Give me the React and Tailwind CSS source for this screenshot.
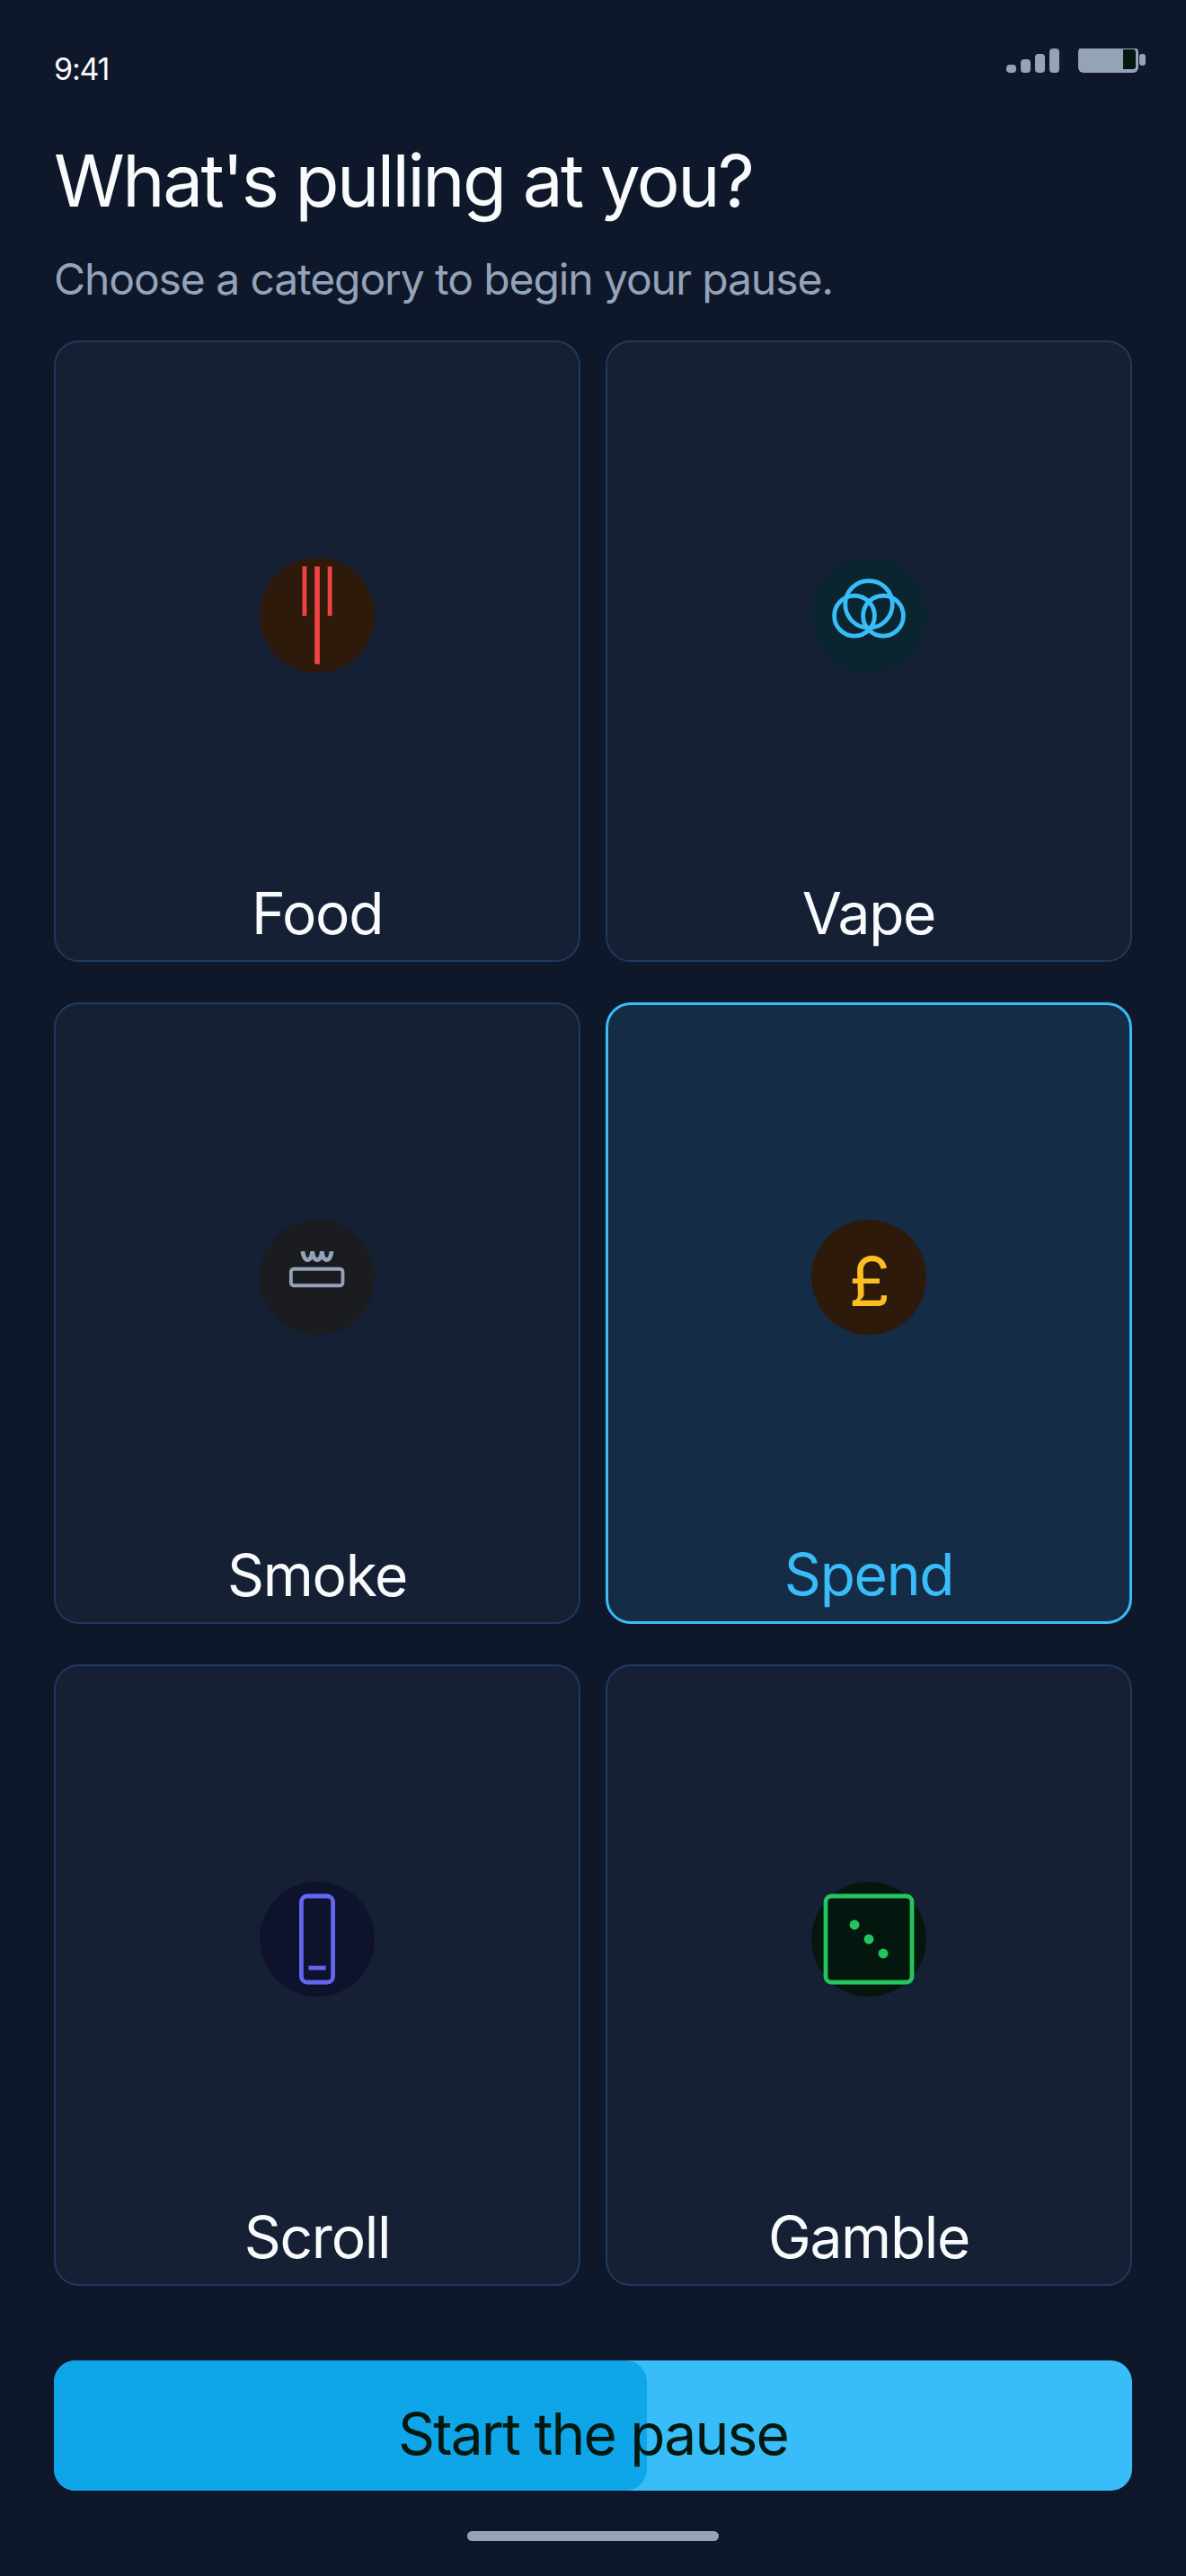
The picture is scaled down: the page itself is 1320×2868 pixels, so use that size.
const categories = [
  { name: "Food", tint: "bg-[#2e1a0b]", icon: <FoodIcon /> },
  { name: "Vape", tint: "bg-[#0a2430]", icon: <VapeIcon /> },
  { name: "Smoke", tint: "bg-[#1a1c20]", icon: <SmokeIcon /> },
  { name: "Spend", tint: "bg-[#2e1a0b]", selected: true, icon: <span className="pl-[2px] pt-[8px] text-[76px] leading-none text-[#fbbf24]">£</span> },
  { name: "Scroll", tint: "bg-[#0f122c]", icon: <ScrollIcon /> },
  { name: "Gamble", tint: "bg-[#04170f]", icon: <GambleIcon /> },
];

function IconSvg({ children }) {
  return (
    <svg width="128" height="128" viewBox="0 0 40 40" fill="none">
      {children}
    </svg>
  );
}

function FoodIcon() {
  return (
    <IconSvg>
      <g stroke="#ef4444">
        <path d="M15.6 3V20.2M24.4 3V20.2" strokeWidth="1.5" />
        <path d="M20 3V37" strokeWidth="1.8" />
      </g>
    </IconSvg>
  );
}

function VapeIcon() {
  return (
    <IconSvg>
      <g stroke="#38bdf8" strokeWidth="1.5">
        <circle cx="20" cy="16.2" r="8.2" />
        <circle cx="15" cy="20.2" r="7" />
        <circle cx="25" cy="20.2" r="7" />
      </g>
    </IconSvg>
  );
}

function SmokeIcon() {
  return (
    <IconSvg>
      <g stroke="#94a3b8">
        <rect x="10.9" y="17.1" width="18" height="5.8" rx="1" strokeWidth="1.2" />
        <path d="M15 11a1.67 3.2 0 0 0 3.33 0a1.67 3.2 0 0 0 3.33 0a1.67 3.2 0 0 0 3.33 0" strokeWidth="1.5" />
      </g>
    </IconSvg>
  );
}

function ScrollIcon() {
  return (
    <IconSvg>
      <g stroke="#6366f1" strokeWidth="1.5">
        <rect x="14.5" y="5" width="11" height="30" rx="2" />
        <path d="M17 30H23" />
      </g>
    </IconSvg>
  );
}

function GambleIcon() {
  return (
    <IconSvg>
      <rect x="5" y="5" width="30" height="30" rx="2" stroke="#22c55e" strokeWidth="1.5" />
      <g fill="#22c55e">
        <circle cx="15" cy="15" r="1.7" />
        <circle cx="20" cy="20" r="1.7" />
        <circle cx="25" cy="25" r="1.7" />
      </g>
    </IconSvg>
  );
}

function StatusIcons() {
  return (
    <svg width="155" height="29" viewBox="0 0 155 29" fill="none">
      <g fill="#94a3b8">
        <rect x="0" y="18" width="11" height="9" rx="4" />
        <rect x="16" y="12" width="11" height="15" rx="4" />
        <rect x="32" y="6" width="11" height="21" rx="4" />
        <rect x="48" y="0" width="11" height="27" rx="4" />
        <rect x="80" y="-2" width="67" height="29" rx="6" />
        <rect x="148" y="6" width="7" height="13" rx="3" />
      </g>
      <path d="M130 1H141a3 3 0 0 1 3 3V20a3 3 0 0 1-3 3H130Z" fill="#04180f" />
    </svg>
  );
}

function CategoryCard({ category }) {
  const { name, tint, selected, icon } = category;
  return (
    <div
      className={`flex h-[692px] flex-col items-center rounded-[28px] ${
        selected ? "border-[3px] border-[#38bdf8] bg-[#152c47]" : "border-2 border-[#1e3a5f] bg-[#162035]"
      }`}
    >
      <div className="flex flex-1 items-center justify-center">
        <div className={`flex h-[128px] w-[128px] items-center justify-center rounded-full ${tint}`}>{icon}</div>
      </div>
      <span className={`h-[80px] text-[64px] leading-[56px] tracking-[-1.25px] ${selected ? "text-[#38bdf8]" : "text-[#f8fafc]"}`}>
        {name}
      </span>
    </div>
  );
}

export default function App() {
  return (
    <div className="flex h-[2868px] w-[1320px] flex-col overflow-hidden bg-[#0f172a] px-[60px] font-['Inter',sans-serif]">
      {/* Status bar */}
      <div className="flex items-start justify-between pt-[54px]">
        <span className="mt-[3px] text-[34px] leading-[40px] tracking-[-1.2px] text-[#f8fafc]">9:41</span>
        <div className="mr-[-15px]">
          <StatusIcons />
        </div>
      </div>

      {/* Header */}
      <h1 className="mt-[54px] text-[80px] leading-[100px] tracking-[-2.5px] text-[#f8fafc]">What's pulling at you?</h1>
      <p className="mt-[30px] text-[48px] leading-[60px] tracking-[-1.1px] text-[#94a3b8]">Choose a category to begin your pause.</p>

      {/* Categories */}
      <div className="mt-[38px] grid grid-cols-2 gap-x-[28px] gap-y-[45px]">
        {categories.map((category) => (
          <CategoryCard key={category.name} category={category} />
        ))}
      </div>

      {/* Start button */}
      <div className="relative mt-[83px] h-[145px] overflow-hidden rounded-[24px] bg-[#38bdf8]">
        <div className="absolute inset-y-0 left-0 w-[660px] rounded-[24px] bg-[#0ea5e9]" />
        <span className="relative flex h-full items-center justify-center pt-[18px] text-[64px] tracking-[-1.8px] text-[#04180f]">
          Start the pause
        </span>
      </div>

      {/* Home indicator */}
      <div className="mx-auto mt-[45px] h-[11px] w-[280px] rounded-full bg-[#94a3b8]" />
    </div>
  );
}
